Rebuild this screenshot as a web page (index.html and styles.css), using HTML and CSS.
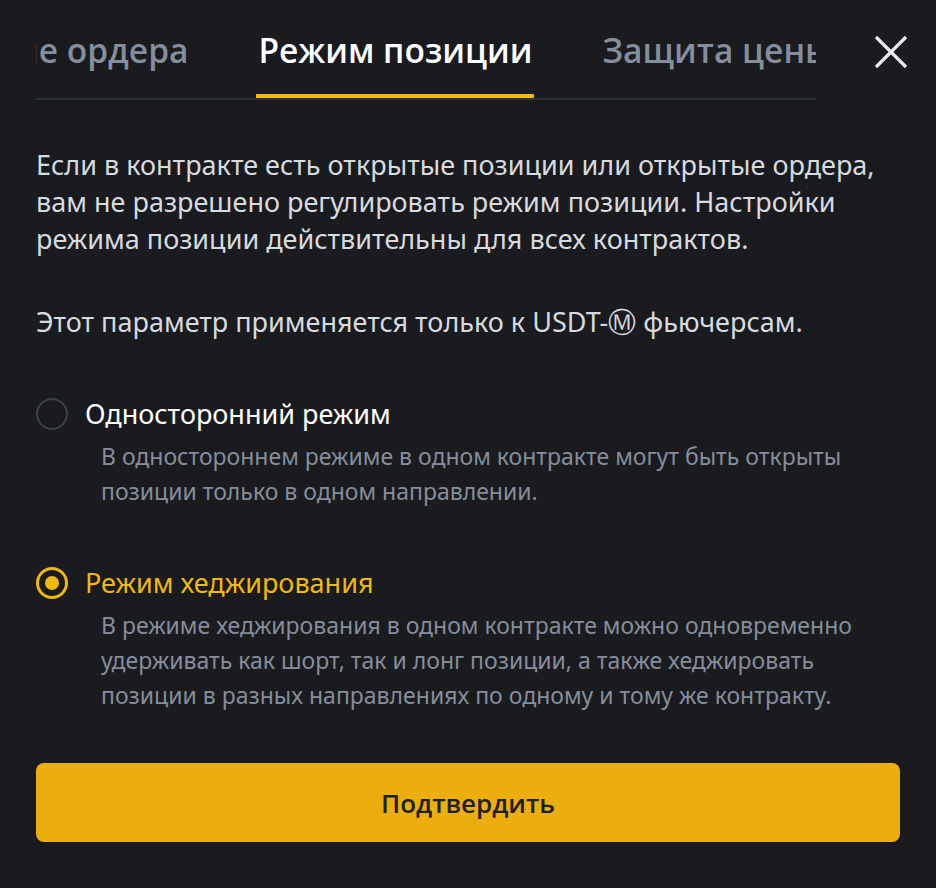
FILE: index.html
```html
<!DOCTYPE html>
<html lang="ru">
  <head>
    <meta charset="UTF-8" />
    <meta name="viewport" content="width=device-width, initial-scale=1.0" />
    <title>Настройки</title>
    <link rel="stylesheet" href="styles.css">
  </head>
  <body>
    <div class="modal">
      <div class="modal-head">
        <div class="tabs" id="tabs">
          <div class="tabs-track">
            <div class="tab">Подтверждение ордера</div>
            <div class="tab active" id="activeTab">Режим позиции</div>
            <div class="tab">Защита цены</div>
          </div>
        </div>
        <button class="close" aria-label="Закрыть">
          <svg width="34" height="34" viewBox="0 0 34 34">
            <path d="M2 2 L32 32 M32 2 L2 32" stroke="#eaecef" stroke-width="3.2" fill="none" />
          </svg>
        </button>
      </div>

      <p class="note">Если в контракте есть открытые позиции или открытые ордера, вам не разрешено регулировать режим позиции. Настройки режима позиции действительны для всех контрактов.</p>
      <p class="note">Этот параметр применяется только к USDT-<span class="m">Ⓜ</span> фьючерсам.</p>

      <div class="options">
        <label class="option">
          <span class="radio"></span>
          <span class="option-title">Односторонний режим</span>
          <span class="option-desc">В одностороннем режиме в одном контракте могут быть открыты позиции только в одном направлении.</span>
        </label>
        <label class="option checked">
          <span class="radio"></span>
          <span class="option-title">Режим хеджирования</span>
          <span class="option-desc">В режиме хеджирования в одном контракте можно одновременно удерживать как шорт, так и лонг позиции, а также хеджировать позиции в разных направлениях по одному и тому же контракту.</span>
        </label>
      </div>

      <button class="confirm">Подтвердить</button>
    </div>

    <script>
      // keep the active tab in view, like the tab strip scrolled to it
      const tabs = document.getElementById("tabs");
      const activeTab = document.getElementById("activeTab");
      tabs.scrollLeft = activeTab.offsetLeft - tabs.offsetLeft - 220;
    </script>
  </body>
</html>
```

FILE: styles.css
```css
body {
  margin: 0;
  background-color: #1a1b1f;
  font-family: "Noto Sans", "Open Sans", sans-serif;
  color: #d7dadf;
}
.modal {
  width: 936px;
  height: 888px;
  box-sizing: border-box;
  padding: 0 36px;
}
.modal-head {
  display: flex;
  align-items: flex-start;
  justify-content: space-between;
}
.tabs {
  width: 780px;
  overflow: hidden;
  border-bottom: 2px solid #2b2f36;
}
.tabs-track {
  display: flex;
  gap: 66px;
}
.tab {
  flex: none;
  font-family: "Open Sans", "Noto Sans", sans-serif;
  font-size: 33.5px;
  font-weight: 600;
  line-height: 40px;
  color: #848e9c;
  padding: 30px 2px 24px;
  border-bottom: 4px solid transparent;
  white-space: nowrap;
}
.tab.active {
  color: #ffffff;
  border-bottom-color: #f0b90b;
}
.close {
  background: none;
  border: none;
  padding: 0;
  margin-top: 35px;
  margin-right: -8px;
  cursor: pointer;
}
.note {
  margin: 0;
  font-size: 27px;
  line-height: 37px;
}
.note:first-of-type {
  margin-top: 46px;
}
.note + .note {
  margin-top: 46px;
}
.m {
  font-family: "DejaVu Sans", sans-serif;
  font-size: 28px;
  line-height: 1;
}
.options {
  margin-top: 56px;
  display: flex;
  flex-direction: column;
  gap: 56px;
}
.option {
  display: grid;
  grid-template-columns: 32px 1fr;
  column-gap: 17px;
  align-items: center;
  cursor: pointer;
}
.radio {
  width: 32px;
  height: 32px;
  border: 2px solid #3c4048;
  border-radius: 50%;
  box-sizing: border-box;
  position: relative;
}
.option-title {
  font-size: 27px;
  line-height: 36px;
  color: #ffffff;
}
.option-desc {
  grid-column: 2;
  margin-left: 16px;
  margin-top: 7px;
  font-size: 23px;
  line-height: 35px;
  color: #848e9c;
}
.option.checked .radio {
  border: 3px solid #f0b90b;
}
.option.checked .radio::after {
  content: "";
  position: absolute;
  left: 6px;
  top: 6px;
  width: 14px;
  height: 14px;
  border-radius: 50%;
  background-color: #f0b90b;
}
.option.checked .option-title {
  color: #f0b90b;
}
.confirm {
  display: block;
  width: 100%;
  height: 79px;
  margin-top: 50px;
  border: none;
  border-radius: 8px;
  background-color: #ebae0d;
  color: #1e2026;
  font-family: "Open Sans", "Noto Sans", sans-serif;
  font-size: 26px;
  font-weight: 600;
  cursor: pointer;
}
```
